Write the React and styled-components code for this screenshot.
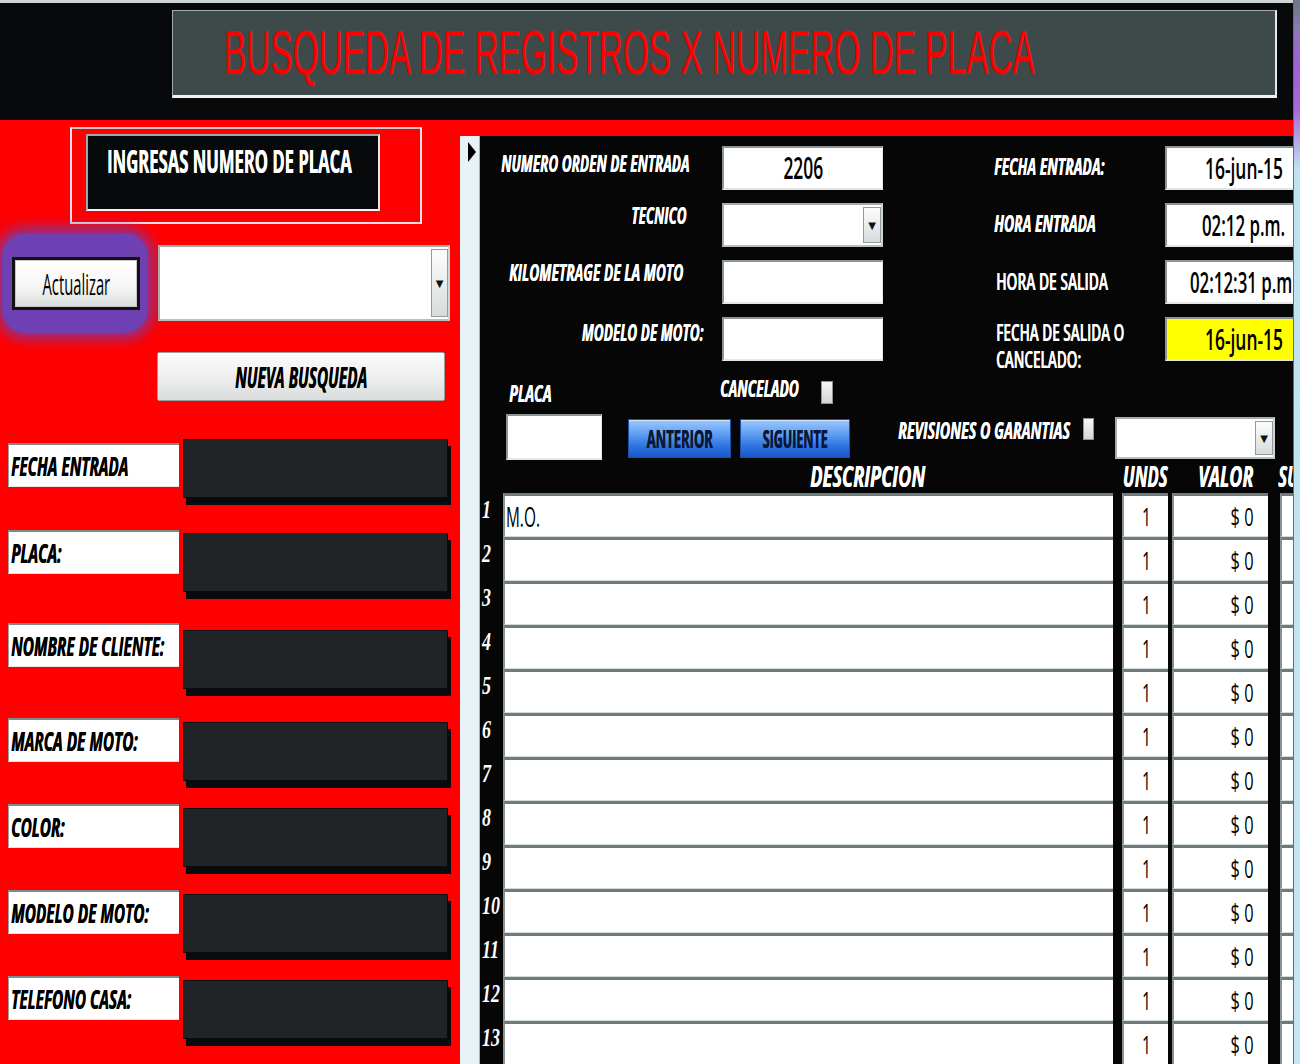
import React from 'react';
import styled, { createGlobalStyle } from 'styled-components';

const GlobalStyle = createGlobalStyle`
  html, body { margin: 0; padding: 0; background: #07090b; }
  body { font-family: "Open Sans", "Liberation Sans", sans-serif; }
  * { box-sizing: border-box; }
`;

// all the Access form text is narrow, so every text run is squeezed horizontally
const Txt = styled.span`
  display: inline-block;
  white-space: nowrap;
  font-family: ${({ $family }) => $family || '"Open Sans", "Liberation Sans", sans-serif'};
  font-size: ${({ $size }) => $size}px;
  line-height: ${({ $lh, $size }) => $lh || $size}px;
  font-weight: ${({ $weight }) => $weight || 400};
  font-style: ${({ $italic }) => ($italic ? 'italic' : 'normal')};
  color: ${({ $color }) => $color || '#000'};
  text-shadow: ${({ $heavy }) => ($heavy ? '0.7px 0 0 currentColor' : 'none')};
  transform: scaleX(${({ $sx }) => $sx || 0.53});
  transform-origin: ${({ $origin }) => $origin || 'left'} center;
`;

const Page = styled.div`
  display: flex;
  width: 1300px;
  height: 1064px;
  overflow: hidden;
  background: #07090b;
`;

const Main = styled.div`
  width: 1293px;
  display: flex;
  flex-direction: column;
`;

const Edge = styled.div`
  width: 7px;
  border-left: 1px solid #5f6f78;
  background: linear-gradient(to bottom, #6b7a82 0, #8d78b8 30px, #a05fd8 70px, #a86ad8 110px, #bfe2f2 170px, #c4e6f5 100%);
`;

const Header = styled.header`
  height: 120px;
  flex-shrink: 0;
  background: #07090b;
  border-top: 3px solid #cfd5d6;
  padding: 7px 0 0 172px;
`;

const TitleBox = styled.div`
  width: 1105px;
  height: 88px;
  background: #3e4a4a;
  border-top: 1px solid #a3abab;
  border-left: 1px solid #a3abab;
  border-right: 2px solid #e6e9e9;
  border-bottom: 3px solid #f2f2f2;
  padding: 10px 0 0 51px;
`;

const Body = styled.div`
  flex: 1;
  display: flex;
  background: #fe0000;
  min-height: 0;
`;

/* ---------- left panel ---------- */

const LeftPanel = styled.div`
  width: 460px;
  padding-top: 7px;
  display: flex;
  flex-direction: column;
`;

const PlateFrame = styled.div`
  margin-left: 70px;
  width: 352px;
  height: 97px;
  border: 2px solid #e4e4e4;
  border-top-color: #c9c9c9;
  padding: 5px 0 0 14px;
`;

const PlateInner = styled.div`
  width: 294px;
  height: 77px;
  background: #07090b;
  border: 2px solid #a2a8a8;
  border-bottom-color: #f4f4f4;
  border-right-color: #e8e8e8;
  padding: 9px 0 0 19px;
`;

const ActionRow = styled.div`
  display: flex;
  align-items: flex-start;
  height: 102px;
  margin-top: 9px;
`;

const GlowWrap = styled.div`
  width: 146px;
  height: 100px;
  margin-left: 2px;
  padding: 24px 0 0 10px;
  border-radius: 24px;
  background: #6f40b4;
  box-shadow: 0 0 12px 7px rgba(112, 64, 180, 0.7);
`;

const RefreshButton = styled.div`
  width: 128px;
  height: 53px;
  border: 3px solid #111;
  background: linear-gradient(to bottom, #ffffff 0%, #f7f7f7 55%, #d9dcdc 100%);
  box-shadow: inset 0 0 0 1px #c7c7c7;
  display: flex;
  align-items: center;
  justify-content: center;
`;

const Combo = styled.div`
  display: flex;
  flex-shrink: 0;
  width: ${({ $w }) => $w}px;
  height: ${({ $h }) => $h}px;
  margin-left: ${({ $ml }) => $ml || 0}px;
  margin-top: ${({ $mt }) => $mt || 0}px;
  background: #fff;
  border: 2px solid #a6acac;
  border-right-color: #cfd4d4;
  border-bottom-color: #b9bfbf;
`;

const ComboField = styled.div`
  flex: 1;
`;

const ComboButton = styled.div`
  width: ${({ $bw }) => $bw || 18}px;
  margin: 2px 0;
  display: flex;
  align-items: center;
  justify-content: center;
  background: linear-gradient(to bottom, #fdfdfd, #d8dcdc);
  border: 1px solid #949b9b;
  font-family: "DejaVu Sans", sans-serif;
  font-size: 10px;
  color: #111;
`;

const NewSearchButton = styled.div`
  margin: 17px 0 0 157px;
  width: 288px;
  height: 49px;
  border: 1px solid #9a9d9d;
  border-radius: 2px;
  background: linear-gradient(to bottom, #fbfbfb 0%, #f0f0f0 45%, #dadddd 100%);
  display: flex;
  align-items: center;
  justify-content: center;
`;

const FieldList = styled.div`
  margin-top: 38px;
  display: flex;
  flex-direction: column;
`;

const FieldRow = styled.div`
  display: flex;
  align-items: flex-start;
  height: ${({ $h }) => $h}px;
`;

const FieldLabel = styled.div`
  width: 171px;
  height: 44px;
  margin: ${({ $mt }) => $mt}px 0 0 8px;
  background: #fff;
  border-top: 2px solid #7f8a8a;
  border-left: 1px solid #9aa3a3;
  border-bottom: 1px solid #e2e6e6;
  padding-left: 2px;
  display: flex;
  align-items: center;
`;

const DarkBox = styled.div`
  width: 265px;
  height: 59px;
  margin: ${({ $mt }) => $mt}px 0 0 ${({ $gap }) => $gap}px;
  background: #212426;
  border: 1px solid #0c0c0c;
  box-shadow: 3px 7px 0 #090a0b;
`;

/* ---------- right panel ---------- */

const RightPanel = styled.div`
  margin-top: 16px;
  width: 833px;
  display: flex;
`;

const Selector = styled.div`
  width: 20px;
  background: #e9f2f6;
  border-right: 1px solid #a7b2b6;
  padding: 6px 0 0 8px;
`;

const Arrow = styled.div`
  width: 0;
  height: 0;
  border-top: 10px solid transparent;
  border-bottom: 10px solid transparent;
  border-left: 8px solid #000;
`;

const Form = styled.div`
  flex: 1;
  background: #060606;
  padding-top: 10px;
  overflow: hidden;
  display: flex;
  flex-direction: column;
`;

const TopGrid = styled.div`
  display: grid;
  grid-template-columns: 242px 161px 282px 140px;
  grid-auto-rows: 44px;
  row-gap: 13px;
`;

const FormLabel = styled.div`
  display: flex;
  flex-direction: column;
  align-items: ${({ $right }) => ($right ? 'flex-end' : 'flex-start')};
  padding: ${({ $pt }) => $pt || 0}px ${({ $pr }) => $pr || 0}px 0 ${({ $pl }) => $pl || 0}px;
`;

const Field = styled.div`
  display: flex;
  align-items: center;
  justify-content: ${({ $center }) => ($center ? 'center' : 'flex-start')};
  width: ${({ $w }) => ($w ? `${$w}px` : 'auto')};
  height: ${({ $h }) => ($h ? `${$h}px` : 'auto')};
  margin-left: ${({ $ml }) => $ml || 0}px;
  padding-left: ${({ $pl }) => $pl || 0}px;
  background: ${({ $bg }) => $bg || '#fff'};
  border-top: 2px solid #8b9595;
  border-left: 2px solid #8b9595;
  border-bottom: 2px solid #e3e7e7;
  border-right: 1px solid #e3e7e7;
  overflow: hidden;
`;

const Caret = styled.span`
  display: inline-block;
  width: 1px;
  height: 26px;
  margin-left: -30px;
  background: #000;
`;

const FlowRow = styled.div`
  display: flex;
  align-items: flex-start;
  height: ${({ $h }) => $h}px;
  margin-top: ${({ $mt }) => $mt || 0}px;
  flex-shrink: 0;
`;

const Slot = styled.div`
  flex-shrink: 0;
  width: ${({ $w }) => $w}px;
  margin-left: ${({ $ml }) => $ml || 0}px;
  padding-top: ${({ $pt }) => $pt || 0}px;
`;

const Check = styled.div`
  flex-shrink: 0;
  width: ${({ $w }) => $w}px;
  height: ${({ $h }) => $h}px;
  margin-top: ${({ $mt }) => $mt || 0}px;
  background: linear-gradient(to bottom, #f6f6f6, #d3d6d6);
  border: 1px solid #8d9393;
`;

const BlueButton = styled.div`
  flex-shrink: 0;
  width: ${({ $w }) => $w}px;
  height: 39px;
  margin: 5px 0 0 ${({ $ml }) => $ml}px;
  border: 1px solid #1d4fa6;
  background: linear-gradient(to bottom, #9cc8ff 0%, #5d9cf2 40%, #2f74e0 70%, #1a58c8 100%);
  box-shadow: inset 0 1px 0 #cfe4ff;
  display: flex;
  align-items: center;
  justify-content: center;
`;

const TableRow = styled.div`
  display: flex;
  flex-shrink: 0;
  height: ${({ $h }) => $h || 44}px;
`;

const HeadCell = styled.div`
  flex-shrink: 0;
  display: flex;
  justify-content: ${({ $center }) => ($center ? 'center' : 'flex-start')};
  width: ${({ $w }) => $w}px;
  margin-left: ${({ $ml }) => $ml || 0}px;
  padding-left: ${({ $pl }) => $pl || 0}px;
`;

const NumCell = styled.div`
  flex-shrink: 0;
  width: 23px;
  padding: 3px 0 0 2px;
`;

const Cell = styled.div`
  flex-shrink: 0;
  display: flex;
  align-items: center;
  justify-content: ${({ $justify }) => $justify || 'flex-start'};
  width: ${({ $w }) => $w}px;
  margin-left: ${({ $ml }) => $ml || 0}px;
  padding: 0 ${({ $pr }) => $pr || 0}px 0 ${({ $pl }) => $pl || 0}px;
  background: #fff;
  border-top: 3px solid #6f7b7b;
  border-left: 2px solid #88938f;
  border-bottom: 1px solid #d3dada;
`;

const leftFields = [
  { label: 'FECHA ENTRADA', h: 91, lt: 4, dt: 0 },
  { label: 'PLACA:', h: 93, lt: 0, dt: 3 },
  { label: 'NOMBRE DE CLIENTE:', h: 95, lt: 0, dt: 7 },
  { label: 'MARCA DE MOTO:', h: 86, lt: 0, dt: 4 },
  { label: 'COLOR:', h: 86, lt: 0, dt: 4 },
  { label: 'MODELO DE MOTO:', h: 86, lt: 0, dt: 4 },
  { label: 'TELEFONO CASA:', h: 88, lt: 0, dt: 4 },
];

const LabelText = ({ children, sx = 0.57, origin, color = '#fff', italic = true, weight = 700, size = 24, lh }) => (
  <Txt $size={size} $lh={lh} $weight={weight} $italic={italic} $color={color} $sx={sx} $origin={origin} $heavy>
    {children}
  </Txt>
);

const ValueText = ({ children, sx = 0.58, size = 30, origin }) => (
  <Txt $size={size} $lh={38} $weight={600} $sx={sx} $origin={origin}>{children}</Txt>
);

const rows = Array.from({ length: 13 }, (_, i) => i + 1);

export default function App() {
  return (
    <>
      <GlobalStyle />
      <Page>
        <Main>
          <Header>
            <TitleBox>
              <Txt $family='"Liberation Sans", Arial, sans-serif' $size={63} $color="#ff0000" $sx={0.53}>
                BUSQUEDA DE REGISTROS X NUMERO DE PLACA
              </Txt>
            </TitleBox>
          </Header>

          <Body>
            <LeftPanel>
              <PlateFrame>
                <PlateInner>
                  <LabelText size={32} italic={false} sx={0.52}>INGRESAS NUMERO DE PLACA</LabelText>
                </PlateInner>
              </PlateFrame>

              <ActionRow>
                <GlowWrap>
                  <RefreshButton>
                    <Txt $size={29} $sx={0.51} $origin="center">Actualizar</Txt>
                  </RefreshButton>
                </GlowWrap>
                <Combo $w={292} $h={76} $ml={10} $mt={12}>
                  <ComboField />
                  <ComboButton $bw={17}>▼</ComboButton>
                </Combo>
              </ActionRow>

              <NewSearchButton>
                <LabelText size={28} color="#000" sx={0.55} origin="center">NUEVA BUSQUEDA</LabelText>
              </NewSearchButton>

              <FieldList>
                {leftFields.map((f) => (
                  <FieldRow key={f.label} $h={f.h}>
                    <FieldLabel $mt={f.lt}>
                      <LabelText size={26} lh={40} color="#000" sx={0.59}>{f.label}</LabelText>
                    </FieldLabel>
                    <DarkBox $mt={f.dt} $gap={4} />
                  </FieldRow>
                ))}
              </FieldList>
            </LeftPanel>

            <RightPanel>
              <Selector>
                <Arrow />
              </Selector>
              <Form>
                <TopGrid>
                  <FormLabel $pl={21} $pt={5}>
                    <LabelText sx={0.565}>NUMERO ORDEN DE ENTRADA</LabelText>
                  </FormLabel>
                  <Field $center>
                    <ValueText origin="center">2206</ValueText>
                  </Field>
                  <FormLabel $pl={111} $pt={8}>
                    <LabelText sx={0.58}>FECHA ENTRADA:</LabelText>
                  </FormLabel>
                  <Field $pl={38}>
                    <ValueText sx={0.6} size={29}>16-jun-15</ValueText>
                    <Caret />
                  </Field>

                  <FormLabel $right $pr={36} $pt={0}>
                    <LabelText sx={0.56} origin="right">TECNICO</LabelText>
                  </FormLabel>
                  <Combo $w={161} $h={44}>
                    <ComboField />
                    <ComboButton>▼</ComboButton>
                  </Combo>
                  <FormLabel $pl={111} $pt={8}>
                    <LabelText sx={0.58}>HORA ENTRADA</LabelText>
                  </FormLabel>
                  <Field $pl={35}>
                    <ValueText size={29}>02:12 p.m.</ValueText>
                  </Field>

                  <FormLabel $pl={29} $pt={0}>
                    <LabelText sx={0.575}>KILOMETRAGE DE LA MOTO</LabelText>
                  </FormLabel>
                  <Field />
                  <FormLabel $pl={113} $pt={9}>
                    <LabelText sx={0.575} italic={false} weight={600}>HORA DE SALIDA</LabelText>
                  </FormLabel>
                  <Field $pl={23}>
                    <ValueText size={29}>02:12:31 p.m.</ValueText>
                  </Field>

                  <FormLabel $right $pr={19} $pt={3}>
                    <LabelText sx={0.565} origin="right">MODELO DE MOTO:</LabelText>
                  </FormLabel>
                  <Field />
                  <FormLabel $pl={113} $pt={1}>
                    <LabelText lh={27} italic={false} weight={600} sx={0.565}>FECHA DE SALIDA O</LabelText>
                    <LabelText lh={27} italic={false} weight={600} sx={0.565}>CANCELADO:</LabelText>
                  </FormLabel>
                  <Field $pl={38} $bg="#ffff00">
                    <ValueText sx={0.6} size={29}>16-jun-15</ValueText>
                  </Field>
                </TopGrid>

                <FlowRow $h={30} $mt={15}>
                  <Slot $ml={29} $w={211} $pt={5}>
                    <LabelText sx={0.59}>PLACA</LabelText>
                  </Slot>
                  <Slot $w={101} $pt={0}>
                    <LabelText sx={0.575}>CANCELADO</LabelText>
                  </Slot>
                  <Check $w={12} $h={23} $mt={5} />
                </FlowRow>

                <FlowRow $h={46} $mt={8}>
                  <Field $ml={26} $w={96} $h={46} />
                  <BlueButton $w={103} $ml={26}>
                    <Txt $size={25} $weight={700} $color="#0b1733" $sx={0.52} $origin="center" $heavy>ANTERIOR</Txt>
                  </BlueButton>
                  <BlueButton $w={110} $ml={9}>
                    <Txt $size={25} $weight={700} $color="#0b1733" $sx={0.5} $origin="center" $heavy>SIGUIENTE</Txt>
                  </BlueButton>
                  <Slot $ml={48} $w={185} $pt={4}>
                    <LabelText sx={0.595}>REVISIONES O GARANTIAS</LabelText>
                  </Slot>
                  <Check $w={11} $h={22} $mt={4} />
                  <Combo $w={160} $h={42} $ml={21} $mt={3}>
                    <ComboField />
                    <ComboButton>▼</ComboButton>
                  </Combo>
                </FlowRow>

                <TableRow $h={33}>
                  <HeadCell $w={23} />
                  <HeadCell $w={610} $pl={307}>
                    <LabelText size={28} lh={33} sx={0.65}>DESCRIPCION</LabelText>
                  </HeadCell>
                  <HeadCell $w={46} $ml={9} $center>
                    <LabelText size={28} lh={33} sx={0.6} origin="center">UNDS</LabelText>
                  </HeadCell>
                  <HeadCell $w={96} $ml={4} $pl={26}>
                    <LabelText size={28} lh={33} sx={0.64}>VALOR</LabelText>
                  </HeadCell>
                  <HeadCell $w={20} $ml={10}>
                    <LabelText size={28} lh={33} sx={0.6}>SU</LabelText>
                  </HeadCell>
                </TableRow>

                {rows.map((n) => (
                  <TableRow key={n}>
                    <NumCell>
                      <Txt $family='"Liberation Serif", "Times New Roman", serif' $size={25} $lh={28} $weight={700} $italic $color="#fff" $sx={0.72}>
                        {n}
                      </Txt>
                    </NumCell>
                    <Cell $w={610} $pl={1}>
                      {n === 1 && <Txt $size={28} $lh={38} $sx={0.55}>M.O.</Txt>}
                    </Cell>
                    <Cell $w={46} $ml={9} $justify="center">
                      <Txt $size={26} $lh={38} $sx={0.6} $origin="center">1</Txt>
                    </Cell>
                    <Cell $w={96} $ml={4} $justify="flex-end" $pr={15}>
                      <Txt $size={26} $lh={38} $sx={0.63} $origin="right">$ 0</Txt>
                    </Cell>
                    <Cell $w={40} $ml={12} />
                  </TableRow>
                ))}
              </Form>
            </RightPanel>
          </Body>
        </Main>
        <Edge />
      </Page>
    </>
  );
}
